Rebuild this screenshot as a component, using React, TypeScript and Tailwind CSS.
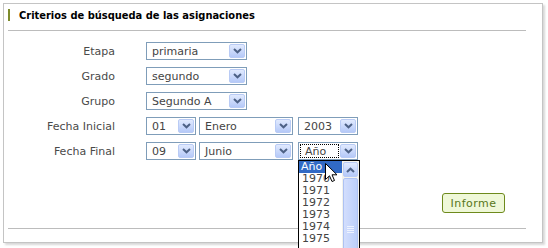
import React from "react";

function Arrow() {
  return (
    <div className="w-[16px] h-[14px] rounded-[2px] border border-[#b9cbf5] bg-linear-to-b from-[#e1eafe] to-[#b5c9f8] flex items-center justify-center">
      <svg width="9" height="6" viewBox="0 0 9 6">
        <path d="M1 1 L4.5 4.3 L8 1" stroke="#4d6185" strokeWidth="2" fill="none" />
      </svg>
    </div>
  );
}

function UpArrow() {
  return (
    <svg width="9" height="6" viewBox="0 0 9 6">
      <path d="M1 5 L4.5 1.7 L8 5" stroke="#4d6185" strokeWidth="2" fill="none" />
    </svg>
  );
}

function Select({ w, text, focus, ml }: { w: string; text: string; focus?: boolean; ml?: string }) {
  return (
    <div className={`flex items-center h-[18px] border border-[#7f9db9] bg-white ${w} ${ml ?? ""}`}>
      {focus ? (
        <div className="flex-1 h-[14px] ml-[1px] mr-[1px] border border-dotted border-black flex items-center pl-[4px] text-[11px] text-[#444] leading-none">
          {text}
        </div>
      ) : (
        <div className="flex-1 pl-[5px] text-[11px] text-[#444] leading-none whitespace-nowrap">{text}</div>
      )}
      <div className="pr-[1px]">
        <Arrow />
      </div>
    </div>
  );
}

function Row({ label, children }: { label: string; children: React.ReactNode }) {
  return (
    <div className="flex items-center h-[18px]">
      <div className="w-[111px] text-right text-[11px] text-[#4a4a4a] leading-none">{label}</div>
      <div className="ml-[31px] flex items-center">{children}</div>
    </div>
  );
}

export default function App() {
  const years = ["1970", "1971", "1972", "1973", "1974", "1975"];
  return (
    <div className="relative w-[548px] h-[248px] overflow-hidden bg-white font-[DejaVu_Sans,Verdana,sans-serif]">
      <div className="ml-[3px] mt-[3px] w-[540px] h-[240px] border border-[#c4c4c4] shadow-[2px_2px_2px_#d8d8d8] bg-white">
        <div className="flex items-start pt-[5px] pl-[4px]">
          <div className="w-[2px] h-[12px] bg-[#7d8b2c]" />
          <div className="ml-[9px] mt-[1px] leading-[12px] text-[11px] font-bold text-black whitespace-nowrap font-[DejaVu_Sans_Condensed,sans-serif]">
            Criterios de búsqueda de las asignaciones
          </div>
        </div>
        <div className="mt-[8px] ml-[4px] w-[518px] h-px bg-[#bcbcbc]" />
        <div className="mt-[11px] flex flex-col gap-[7px]">
          <Row label="Etapa">
            <Select w="w-[101px]" text="primaria" />
          </Row>
          <Row label="Grado">
            <Select w="w-[101px]" text="segundo" />
          </Row>
          <Row label="Grupo">
            <Select w="w-[101px]" text="Segundo A" />
          </Row>
          <Row label="Fecha Inicial">
            <Select w="w-[50px]" text="01" />
            <Select w="w-[94px]" ml="ml-[3px]" text="Enero" />
            <Select w="w-[60px]" ml="ml-[5px]" text="2003" />
          </Row>
          <Row label="Fecha Final">
            <Select w="w-[50px]" text="09" />
            <Select w="w-[94px]" ml="ml-[3px]" text="Junio" />
            <Select w="w-[60px]" ml="ml-[5px]" text="Año" focus />
          </Row>
        </div>
        <div className="mt-[33px] w-[501px] flex justify-end">
          <button className="w-[63px] h-[20px] rounded-[3px] border border-[#6e8a1c] bg-[#eff8d8] text-[11px] font-normal text-[#58761a] tracking-[0.5px] leading-none">
            Informe
          </button>
        </div>
        <div className="mt-[15px] ml-[4px] w-[518px] h-px bg-[#bcbcbc]" />
      </div>

      {/* dropdown list */}
      <div className="absolute left-[298px] top-[160px] w-[62px] h-[100px] border border-black bg-white flex">
        <div className="w-[43px] flex flex-col">
          <div className="h-[12px] bg-[#316ac5] text-white text-[11px] leading-[12px] pl-[2px]">Año</div>
          {years.map((y) => (
            <div key={y} className="h-[12px] text-[#444] text-[11px] leading-[12px] pl-[3px]">
              {y}
            </div>
          ))}
        </div>
        <div className="w-[17px] bg-[#f3f2ec] flex flex-col items-center pt-[1px]">
          <div className="w-[15px] h-[15px] rounded-[2px] border border-[#b9cbf5] bg-linear-to-b from-[#e1eafe] to-[#b5c9f8] flex items-center justify-center">
            <UpArrow />
          </div>
          <div className="mt-[1px] w-[15px] flex-1 rounded-[2px] border border-[#aec2f3] bg-linear-to-r from-[#d3defd] to-[#bccffa] flex flex-col items-center pt-[47px] gap-[1px]">
            <div className="w-[7px] h-px bg-[#eef3ff]" />
            <div className="w-[7px] h-px bg-[#eef3ff]" />
            <div className="w-[7px] h-px bg-[#eef3ff]" />
            <div className="w-[7px] h-px bg-[#eef3ff]" />
          </div>
        </div>
      </div>

      {/* mouse cursor */}
      <svg className="absolute left-[325px] top-[163px]" width="13" height="20" viewBox="0 0 13 20">
        <path d="M0.5 0.5 L0.5 16.5 L4.5 12.8 L7 18.5 L9.5 17.5 L7 11.8 L12 11.8 Z" fill="white" stroke="black" strokeWidth="1" />
      </svg>
    </div>
  );
}
